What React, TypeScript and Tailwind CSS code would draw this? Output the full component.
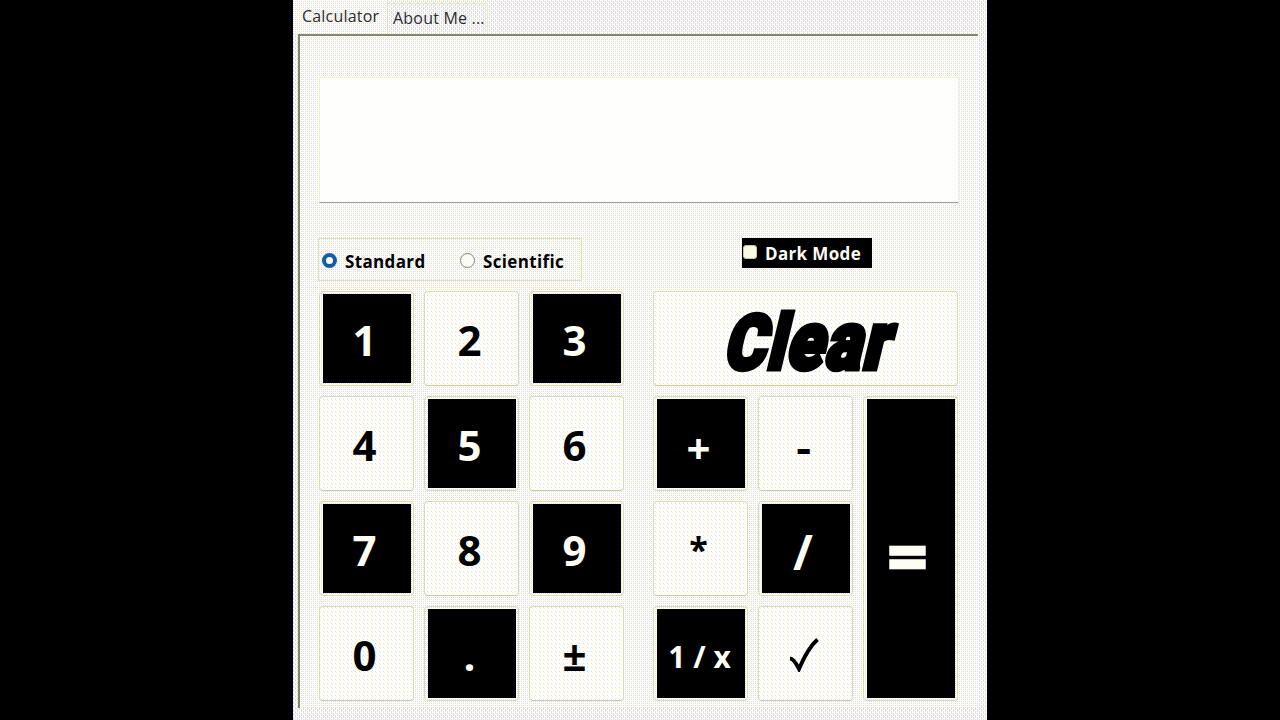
import { useState } from "react";
import type { ReactNode } from "react";

const SURFACE =
  "bg-white bg-fixed [background-image:conic-gradient(at_1px_1px,transparent_75%,#ffffaa_0),conic-gradient(at_1px_1px,transparent_75%,#ffffaa_0),conic-gradient(at_1px_1px,transparent_75%,#dbdbff_0)] [background-size:4px_4px,4px_4px,2px_2px] [background-position:0_0,2px_2px,1px_1px]";
const STRIP =
  "bg-white bg-fixed [background-image:conic-gradient(at_1px_1px,transparent_75%,#ffffaa_0),conic-gradient(at_1px_1px,transparent_75%,#ffffaa_0),conic-gradient(at_1px_1px,transparent_75%,#dbdbff_0),conic-gradient(at_1px_1px,transparent_75%,#dbdbff_0),conic-gradient(at_1px_1px,transparent_75%,#dbdbff_0)] [background-size:4px_4px,4px_4px,4px_4px,4px_4px,2px_2px] [background-position:0_0,2px_2px,3px_0,1px_2px,1px_1px]";
const FIELD =
  "bg-[#fefefe] bg-fixed [background-image:conic-gradient(at_1px_1px,transparent_75%,#ffffaa_0),conic-gradient(at_1px_1px,transparent_75%,#ffffaa_0)] [background-size:8px_8px,8px_8px] [background-position:2px_0,6px_4px]";
const KEY =
  "bg-[#fefefe] bg-fixed [background-image:conic-gradient(at_1px_1px,transparent_75%,#ffffaa_0),conic-gradient(at_1px_1px,transparent_75%,#dbdbff_0)] [background-size:4px_4px,4px_4px] [background-position:0_0,3px_3px]";

type KeyProps = {
  dark?: boolean;
  className?: string;
  label: string;
  children?: ReactNode;
};

function Key({ dark, className = "", label, children }: KeyProps) {
  return (
    <button
      aria-label={label}
      className={`flex rounded-[4px] border border-[#dcdcb4] py-[2px] pr-[2px] pl-[3px] font-bold leading-none ${
        dark ? "text-[#fdfdf4]" : `${KEY} border-b-[#cacaa8] text-black`
      } ${className}`}
    >
      <span
        className={`flex h-full w-full items-center justify-center pr-[5px] ${dark ? "bg-black" : ""}`}
      >
        {children ?? label}
      </span>
    </button>
  );
}

const DIGITS = ["1", "2", "3", "4", "5", "6", "7", "8", "9", "0", ".", "±"];
const DARK_DIGITS = ["1", "3", "5", "7", "9", "."];

export default function App() {
  const [mode, setMode] = useState("Standard");
  return (
    <div className="flex h-[720px] w-[1280px] justify-center overflow-hidden bg-black font-['Open_Sans','Noto_Sans',sans-serif] text-black">
      <div className={`flex h-full w-[694px] flex-col ${STRIP}`}>
        <nav className="flex h-[34px] shrink-0 text-[16px] leading-none tracking-[0.2px] text-[#2c2c2c]">
          <div className={`h-full w-[95px] border-r border-[#e0e0c4] pt-[8px] pl-[9px] ${SURFACE}`}>
            <span className="whitespace-nowrap">Calculator</span>
          </div>
          <div className="mt-[3px] h-[30px] w-[100px] border-t border-r border-[#e8e8c8] pt-[6px] pl-[5px]">
            <span className="whitespace-nowrap">About Me ...</span>
          </div>
        </nav>
        <main
          className={`ml-[5px] flex h-[674px] w-[680px] flex-col border-t-2 border-l-2 border-[#85856a] pl-[19px] ${SURFACE}`}
        >
          <div
            className={`mt-[41px] h-[126px] w-[640px] shrink-0 border border-[#f0f0d4] border-b-[#a0a09a] ${FIELD}`}
          />
          <div className="mt-[35px] flex h-[43px] w-[640px] shrink-0 text-[17px] font-bold leading-none tracking-[0.35px]">
            <div className="-ml-px flex h-[43px] w-[264px] items-center border border-[#e2e2a8] pt-[1px] pl-[3px]">
              {["Standard", "Scientific"].map((name) => (
                <button
                  key={name}
                  onClick={() => setMode(name)}
                  className="flex w-[138px] shrink-0 items-center gap-[8px]"
                >
                  <span
                    className={
                      mode === name
                        ? "h-[15px] w-[15px] rounded-full border-[4.5px] border-[#105ea8] bg-white"
                        : "h-[15px] w-[15px] rounded-full border border-[#85857c] bg-[#fcfcf6]"
                    }
                  />
                  <span className="pt-[2px]">{name}</span>
                </button>
              ))}
            </div>
            <label className="ml-[160px] flex h-[30px] w-[130px] items-center gap-[8px] bg-black pl-[1px] text-[#fdfdf4]">
              <span className="mb-[2px] h-[14px] w-[14px] rounded-[3px] border border-[#c8c8b0] bg-[#fafae0]" />
              <span>Dark Mode</span>
            </label>
          </div>
          <div className="mt-[10px] flex gap-[29px]">
            <div className="grid grid-cols-[95px_95px_95px] grid-rows-[95px_95px_95px_95px] gap-[10px] text-[42px]">
              {DIGITS.map((d) => (
                <Key key={d} label={d} dark={DARK_DIGITS.includes(d)}>
                  <span className="pt-[3px]">{d}</span>
                </Key>
              ))}
            </div>
            <div className="grid grid-cols-[95px_95px_95px] grid-rows-[95px_95px_95px_95px] gap-[10px] text-[42px]">
              <Key label="Clear" className="col-span-3">
                <span className="inline-block origin-center translate-x-[9px] translate-y-[2px] -skew-x-[16deg] scale-x-[0.83] whitespace-nowrap font-[Roboto] text-[76px] font-black tracking-[2px] [-webkit-text-stroke:5px_black]">
                  Cl<span className="text-[82px]">ear</span>
                </span>
              </Key>
              <Key label="+" dark>
                <span className="pt-[8px]">+</span>
              </Key>
              <Key label="-">
                <span className="scale-x-110 pt-[7px]">-</span>
              </Key>
              <Key label="=" dark className="row-span-3">
                <span className="pt-[12px] pr-[2px] text-[70px] [-webkit-text-stroke:2.5px_#fdfdf4]">=</span>
              </Key>
              <Key label="*">
                <span className="pt-[0px] text-[34px]">*</span>
              </Key>
              <Key label="/" dark>
                <span className="pt-[7px] pr-[1px] text-[48px]">/</span>
              </Key>
              <Key label="1 / x" dark>
                <span className="whitespace-nowrap pt-[6px] pl-[2px] text-[30px]">1 / x</span>
              </Key>
              <Key label="Square root">
                <svg viewBox="0 0 32 34" className="mt-[3px] h-[34px] w-[32px]" fill="none" stroke="black">
                  <path d="M2 20.500C5 20.500 8 25 11 31C16 19 21 9 29.500 1.500" strokeWidth="3.900" />
                </svg>
              </Key>
            </div>
          </div>
        </main>
      </div>
    </div>
  );
}
